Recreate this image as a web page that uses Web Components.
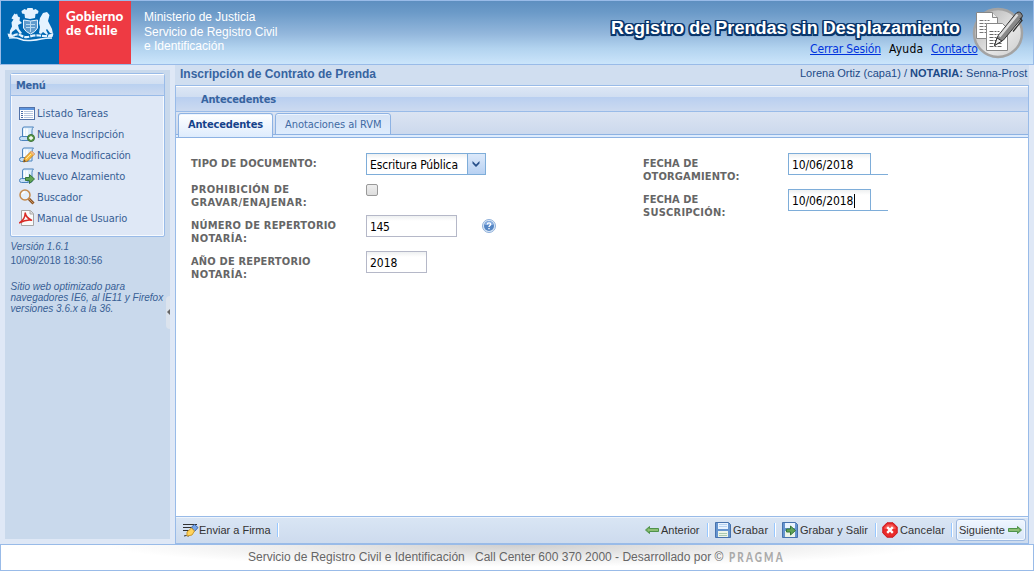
<!DOCTYPE html>
<html lang="es"><head><meta charset="utf-8"><title>Registro de Prendas sin Desplazamiento</title>
<style>
html,body{margin:0;height:571px;overflow:hidden;background:#dfe8f6}
body{--tahoma:"DejaVu Sans Condensed","DejaVu Sans",sans-serif;--arial:"Liberation Sans",Arial,sans-serif;font:11px/13px var(--arial);color:#15428b}
</style></head><body><rp-app></rp-app>
<script>
const define=(name,html,after)=>customElements.define(name,class extends HTMLElement{
  connectedCallback(){
    if(this.shadowRoot)return;
    const t=document.createElement('template');
    t.innerHTML='<style>*{box-sizing:border-box}</style>'+html;
    this.attachShadow({mode:'open'}).append(t.content.cloneNode(true));
    if(after)after.call(this);
  }
});

/* A single line of text tracked to a given width. */
define('fit-text','<style>:host{display:block;white-space:pre;flex:none}:host([t]){font-family:var(--tahoma);font-stretch:condensed}:host([b]){font-weight:bold}span{display:inline-block}:host([u]) span{text-decoration:underline}</style><span><slot></slot></span>',function(){
  const w=+this.getAttribute('w'),s=this.shadowRoot.querySelector('span');
  this.style.width=w+'px';
  const n=[...this.textContent].length;
  s.style.letterSpacing=((w-s.offsetWidth)/n)+'px';
});

const page='<path d="M5 1h9.500q-1.500 1-1.500 3.500V14H3.500V3Q3.500 1 5 1z" fill="#dcedfc" stroke="#4b83bd"/><path d="M5.500 2.500V11M8 2.500V11" stroke="#fff" stroke-width="1.500"/><path d="M2.500 10.500H9V14.500H2.500q-2 0-2-2t2-2z" fill="#c4def5" stroke="#4b83bd"/>';
const icons={
list:'<rect x=".5" y="2.500" width="15" height="12" fill="#fff" stroke="#5272a8"/><path d="M1 4h14" stroke="#5c94de" stroke-width="2"/><path d="M2 6.500h2m-2 2h2m-2 2h2m-2 2h2" stroke="#4b6ea8"/><path d="M5 6.500h9m-9 2h9m-9 2h9m-9 2h9" stroke="#b6c6de"/>',
add:page+'<circle cx="12" cy="12" r="3.500" fill="#5d9e48" stroke="#3c6f38"/><path d="M12 10v4m-2-2h4" stroke="#fff" stroke-width="1.300"/>',
edit:page+'<path d="M4.500 15l1-4 7-7 3 3-7 7z" fill="#f8bc42" stroke="#c8801c"/><path d="M11.500 5l3 3 1-1-3-3z" fill="#ecb5a0"/><path d="M4.500 15l2.500-.7-1.800-1.800z" fill="#54483b"/><path d="M7 12l5-5" stroke="#ffe9a0"/>',
go:page+'<path d="M6.500 9.500h4v-3l5 4.500-5 4.500v-3h-4z" fill="#61a455" stroke="#37763b"/>',
search:'<path d="M9.800 9.800l4.700 4.700" stroke="#8a5427" stroke-width="3"/><path d="M10 10l4.500 4.500" stroke="#cb935b"/><circle cx="6" cy="6" r="5" fill="#e6f1fc" stroke="#c58a4c" stroke-width="1.500"/><path d="M3 5q1-2 3-2" stroke="#fff" stroke-width="1.500" fill="none"/>',
pdf:'<path d="M2.500.5h9l3 3v12h-12z" fill="#fafafa" stroke="#a5a5a5"/><path d="M11 .5V4h3.500" fill="#ddd" stroke="#aaa"/><path d="M.5 12.800Q6 9.500 6.200 3 7 7.500 12.500 10.200 7 9.500.5 12.800z" fill="none" stroke="#d92b26" stroke-width="1.500" stroke-linejoin="round"/>',
sign:'<path d="M0 2.500h14M0 5.500h11M0 8.500h7" stroke="#333" stroke-width="1.200"/><path d="M1 14q2-1 5 0" stroke="#333" fill="none"/><path d="M8.500 5l3-2.500 3.500 3-3.500 4z" fill="#76a5e8" stroke="#3d68ae"/><path d="M4 14V10L8.500 6l3 3-2.500 4z" fill="#ffd35c" stroke="#cb982d"/>',
left:'<path d="M1.500 8l4-3.500v2h9v3h-9v2z" fill="#72ad5d" stroke="#4f934b"/><path d="M4 8h10" stroke="#a8d08d"/>',
right:'<path d="M14.500 8l-4-3.500v2h-9v3h9v2z" fill="#72ad5d" stroke="#4f934b"/><path d="M2 8h10" stroke="#a8d08d"/>',
save:'<path d="M.5.5h13l2 2v13H.5z" fill="#6594cf" stroke="#4772ad"/><path d="M3 1h10v6H3z" fill="#e9f3ff"/><path d="M4 2.500h8M4 4.500h8" stroke="#b6d2f1"/><path d="M3 9h10v6H3z" fill="#edf4e9"/><path d="M4 11.500h8m-8 2h8" stroke="#a8c9b0"/>',
savego:'<path d="M.5.5h13l2 2v13H.5z" fill="#6594cf" stroke="#4772ad"/><path d="M3 1h10v5H3z" fill="#e9f3ff"/><path d="M3 9h10v6H3z" fill="#edf4e9"/><path d="M4.500 7h4V4l5 4.500-5 4.500v-3h-4z" fill="#61a455" stroke="#37763b"/>',
cancel:'<path d="M5 .8h6L15.200 5v6L11 15.200H5L.8 11V5z" fill="#e92b2b" stroke="#c9161d"/><path d="M2.500 7V5.500l3-3h5l3 3V7z" fill="#ff7770" opacity=".6"/><path d="M5.200 5.200l5.600 5.600m0-5.600l-5.600 5.600" stroke="#fff" stroke-width="2.400"/>',
help:'<circle cx="8" cy="8" r="6.500" fill="#dce9f7" stroke="#8fb0da"/><circle cx="8" cy="8" r="5" fill="#5485c4"/><path d="M3.500 7a4.500 4 0 0 1 9 0z" fill="#87ade0"/><path d="M6.300 6.500q0-1.600 1.700-1.600t1.700 1.400c0 1.200-1.700 1.300-1.700 2.600M8 10v1.300" fill="none" stroke="#fff" stroke-width="1.400"/>'
};
define('rp-icon','<style>:host{display:block;width:16px;height:16px;flex:none}svg{display:block}</style><svg width="16" height="16" viewBox="0 0 16 16"></svg>',function(){this.shadowRoot.querySelector('svg').innerHTML=icons[this.getAttribute('name')]});

define('rp-arms',`<style>:host{display:block;width:58px;height:63px;background:#0068b3}</style>
<svg width="58" height="63" viewBox="1 1 58 63" fill="#e5f3ff"><path d="M25 18l-.5-4-2.500-.5-.5-2.500 3-2 2 1 1-2h5l1 2 2-1 3 2-.5 2.500-2.500.5-.5 4-5 1z"/><path d="M23.500 20q7 2 14 0v8q-2 4-7 6-5-2-7-6z" fill="#5f9bcd" stroke="#e5f3ff"/><path d="M26 24.500h9m-9 3h9M30.500 21v11" stroke="#b8d9f0" fill="none"/><path d="M22 23l-4 2 1 4 3 4-2 1-4-5-4 3-1 4-1.500-.5.500-5 2-4-.5-4 2-3-2-1 1-2 2-3 1.500 1 1-1 1 3 2 1-.5 3z"/><path d="M39 23l1-5 3-5 4-1 2.500 3-1.500 6 4 8 1 5-3-1-3-4-1 1 2 4-1 1-4-3-2 2-2-1 1-6z"/><path d="M7.500 33.500l5 1 1 3-5-.5zm46 0l-5 1-1 3 5-.5z"/><path d="M13 36q4-3 8-.500t9 1 9-1 9 .5" fill="none" stroke="#e5f3ff" stroke-width="2.200" stroke-dasharray="5 1"/><path d="M9 38q7-1 11 1t10.500 1.500T41 39t11-1" fill="none" stroke="#e5f3ff" stroke-width="1.500"/></svg>`);
define('rp-seal',`<style>:host{display:block;width:52px;height:54px}svg{display:block}</style><svg width="52" height="54" viewBox="0 0 52 54"><defs><linearGradient id="g" x2="1" y2="1"><stop stop-color="#aaa"/><stop offset=".6" stop-color="#e6e6e6"/><stop offset="1" stop-color="#ccc"/></linearGradient></defs><circle cx="26" cy="27" r="24" fill="url(#g)" stroke="#a3a3a3" stroke-width="2.500"/><path d="M4.500 6.500h16l5 5v21h-21z" fill="#fff" stroke="#888"/><path d="M20.500 6.500v5h5" fill="#eee" stroke="#888"/><path d="M7.500 14.500h10m-10 3h7m-7 3h7m-7 3h7m-7 3h7" stroke="#777" stroke-dasharray="4 1 2 1"/><path d="M14.500 17.500h16l5 5v22h-21z" fill="#fff" stroke="#888"/><path d="M17.500 25.500h10m-10 3h12m-12 3h11m-11 3h9m-9 3h13m-13 3h12" stroke="#666" stroke-dasharray="4 1 2 1"/><path d="M22.500 39.500l3-9L43 8.500q3-4 6-1.500t0 6L31.500 34z" fill="#888" stroke="#333"/><path d="M27.500 30.500L45.500 8.500" stroke="#ddd" stroke-width="2.500"/><path d="M22.500 39.500l2.500-7.500 5 3z" fill="#eee" stroke="#333"/><path d="M48 12l2 2.500-9 11" fill="none" stroke="#333" stroke-width="1.300"/></svg>`);

define('rp-header',`<style>:host{display:flex;height:65px;border:1px solid #99bbe8;background:linear-gradient(#5e8fc0,#6b9ac8 18%,#93b7dc 52%,#b2d3ef 75%,#cbe5fb)}
.gob{width:72px;background:#ee3a43;color:#fff;padding:9px 0 0 7px;font:900 13.500px/13px Lato,sans-serif}
.min{margin-left:13px;padding-top:9px;color:#fff;font:12px/14.500px var(--arial)}
.right{margin-left:auto;width:422px;padding-top:16px;flex:none}
.title{color:#fff;font:bold 18px/22px var(--arial);text-shadow:-1.500px 0 #0a366c,1.500px 0 #0a366c,0 -1.500px #0a366c,0 1.500px #0a366c,-1.500px -1.500px 0 #0a366c,1.500px 1.500px 0 #0a366c,1.500px -1.500px 0 #0a366c,-1.500px 1.500px 0 #0a366c,0 2px 1px #0a366c}
.links{display:flex;padding:3px 0 0 199px;font-size:12px;line-height:14px;color:#000}.links [u]{color:#0033dd}
.links>*+*{margin-left:8px}rp-seal{margin:5px 9px 0 -61px;flex:none}</style>
<rp-arms></rp-arms><div class="gob"><fit-text w="58" style="height:14px">Gobierno</fit-text><fit-text w="52">de Chile</fit-text></div>
<div class="min"><fit-text w="111">Ministerio de Justicia</fit-text><fit-text w="133">Servicio de Registro Civil</fit-text><fit-text w="80">e Identificación</fit-text></div>
<div class="right"><fit-text class="title" w="349">Registro de Prendas sin Desplazamiento</fit-text><div class="links"><fit-text u t w="71">Cerrar Sesión</fit-text><fit-text t w="34">Ayuda</fit-text><fit-text u t w="47">Contacto</fit-text></div></div>
<rp-seal></rp-seal>`);

define('menu-item','<style>:host{display:flex;height:21px;align-items:center;font-family:var(--tahoma);color:#385f95}</style><slot name="icon"></slot><slot></slot>',function(){const i=document.createElement('rp-icon');i.setAttribute('name',this.getAttribute('icon'));i.slot='icon';i.style.margin='0 2px 2px 0';this.append(i)});

define('rp-side',`<style>:host{display:flex;width:175px;padding:5px}
.w{width:165px;background:#c9d9ec;padding:3px 5px;position:relative}
.panel{height:164px;border:1px solid #99bbe8;border-radius:3px 3px 2px 2px;background:#dfe8f6;box-shadow:inset 0 0 0 1px #f6faff}
.head{height:22px;padding:5px 0 0 5px;border-bottom:1px solid #99bbe8;background:linear-gradient(#fff 0 1px,#dce6f5 1px,#d0def1 49%,#bad1f0 50%,#ccdaf0);color:#3764a0}
.items{padding:7px 8px}.info{font-size:10px;line-height:11px;color:#385f95;padding:4px 0 0 .5px}.d{padding:3px 0 15px}
.grip{position:absolute;right:0;top:226px;width:4px;height:33px;background:#dbe3ed;border-radius:4px 0 0 4px}.grip svg{display:block;margin-top:13px}</style>
<div class="w"><div class="panel"><div class="head"><fit-text t b w="30">Menú</fit-text></div><div class="items">
<menu-item icon="list"><fit-text t w="71">Listado Tareas</fit-text></menu-item><menu-item icon="add"><fit-text t w="87">Nueva Inscripción</fit-text></menu-item><menu-item icon="edit"><fit-text t w="94">Nueva Modificación</fit-text></menu-item><menu-item icon="go"><fit-text t w="88">Nuevo Alzamiento</fit-text></menu-item><menu-item icon="search"><fit-text t w="45">Buscador</fit-text></menu-item><menu-item icon="pdf"><fit-text t w="90">Manual de Usuario</fit-text></menu-item></div></div>
<div class="info"><i><fit-text w="59">Versión 1.6.1</fit-text></i><div class="d"><fit-text w="92">10/09/2018 18:30:56</fit-text></div><i><fit-text w="115">Sitio web optimizado para</fit-text><fit-text w="153">navegadores IE6, al IE11 y Firefox</fit-text><fit-text w="103">versiones 3.6.x a la 36.</fit-text></i></div>
<div class="grip"><svg width="4" height="6"><path d="M4 0v6L1 3z" fill="#666"/></svg></div></div>`);

define('rp-field',`<style>:host{display:flex;height:36px;color:#666}:host([short]){height:26px}.l{padding-top:4px;flex:none;width:var(--lw,175px)}</style><div class="l"><slot name="l"></slot></div><slot></slot>`);
define('rp-input',`<style>:host{box-sizing:border-box;display:flex;height:22px;border:1px solid #b5b8c8;background:linear-gradient(#eef0f1,#fff 5px);color:#000;font:12px/14px var(--tahoma);padding:4px 0 0 3px;flex:none}:host([blue]){border-color:#7eadd9}</style><slot></slot>`);

define('rp-form',`<style>:host{display:flex;height:378px;background:#fff;padding:15px 0 0 15px}.a{width:452px}.b{--lw:145px}
.arrow{width:18px;height:20px;margin:-4px 0 0 auto;border-left:1px solid #7eadd9;background:linear-gradient(#dce9fa,#b8d1f2)}.arrow svg{display:block;margin:6px 0 0 3px}
.check{width:12px;height:12px;border:1px solid #999;border-radius:2px;background:linear-gradient(#eee,#ddd);margin-top:5px}
.help{margin:3px 0 0 24px}.line{width:17px;height:22px;border-bottom:1px solid #7eadd9}.caret{width:1px;height:14px;background:#000;margin-left:1px}</style>
<div class="a"><rp-field short><fit-text slot="l" t b w="126">TIPO DE DOCUMENTO:</fit-text><rp-input blue style="width:120px"><fit-text t w="88">Escritura Pública</fit-text><div class="arrow"><svg width="10" height="8"><path d="M1.500 1l3.500 3.500L8.500 1v2.500L5 7 1.500 3.500z" fill="#28508a"/></svg></div></rp-input></rp-field>
<rp-field><div slot="l"><fit-text t b w="99">PROHIBICIÓN DE</fit-text><fit-text t b w="116">GRAVAR/ENAJENAR:</fit-text></div><div class="check"></div></rp-field>
<rp-field><div slot="l"><fit-text t b w="145">NÚMERO DE REPERTORIO</fit-text><fit-text t b w="56">NOTARÍA:</fit-text></div><rp-input style="width:91px"><fit-text t w="20">145</fit-text></rp-input><rp-icon class="help" name="help"></rp-icon></rp-field>
<rp-field><div slot="l"><fit-text t b w="120">AÑO DE REPERTORIO</fit-text><fit-text t b w="56">NOTARÍA:</fit-text></div><rp-input style="width:61px"><fit-text t w="27">2018</fit-text></rp-input></rp-field></div>
<div class="b"><rp-field><div slot="l"><fit-text t b w="55">FECHA DE</fit-text><fit-text t b w="97">OTORGAMIENTO:</fit-text></div><rp-input blue style="width:83px"><fit-text t w="61">10/06/2018</fit-text></rp-input><div class="line"></div></rp-field>
<rp-field><div slot="l"><fit-text t b w="55">FECHA DE</fit-text><fit-text t b w="83">SUSCRIPCIÓN:</fit-text></div><rp-input blue style="width:83px"><fit-text t w="61">10/06/2018</fit-text><div class="caret"></div></rp-input><div class="line"></div></rp-field></div>`);

define('rp-tabs',`<style>:host{display:flex;height:26px;background:linear-gradient(#dbe4f2,#ccd9ed 22px,#8db2e3 22px 23px,#deecfd 23px 25px,#8db2e3 25px);padding:1px 0 0 2px}
div{height:22px;border:1px solid #8db2e3;border-radius:3px 3px 0 0;padding:4px 9px 0;background:linear-gradient(#d6e3f5,#deecfd);box-shadow:inset 0 1px #edf5ff;color:#416aa3}
.on{height:24px;border-bottom:0;background:linear-gradient(#fff,#deecfd);color:#15428b;margin-right:2px}</style><div class="on"><fit-text t b w="75">Antecedentes</fit-text></div><div><fit-text t w="96">Anotaciones al RVM</fit-text></div>`);

define('rp-toolbar',`<style>:host{display:flex;align-items:center;height:28px;border-top:1px solid #99bbe8;border-bottom:1px solid #99bbe8;background:linear-gradient(#eef4fc 0 1px,#d9e5f4 1px,#cddbee);padding-left:7px;color:#333}
i{width:2px;height:14px;background:linear-gradient(90deg,#98c8ff 50%,#fff 50%);margin:0 6px 0 7px}
.sp{flex:1}rp-icon{margin-right:2px}.n{display:flex;align-items:center;width:70px;height:22px;margin-right:2px;border:1px solid #9ebae1;border-radius:3px;background:linear-gradient(#eff6ff,#d8e6f8);box-shadow:inset 0 0 0 1px #f2f8ff;padding-left:2px}.n rp-icon{margin-left:2px}</style>
<rp-icon name="sign" style="margin-right:0"></rp-icon><fit-text w="72">Enviar a Firma</fit-text><i style="margin-left:6px"></i><div class="sp"></div>
<rp-icon name="left" style="margin-right:1px"></rp-icon><fit-text w="39">Anterior</fit-text><i></i><rp-icon name="save"></rp-icon><fit-text w="35">Grabar</fit-text><i style="margin-left:6px"></i><rp-icon name="savego"></rp-icon><fit-text w="68">Grabar y Salir</fit-text><i style="margin-left:7px;margin-right:5px"></i><rp-icon name="cancel"></rp-icon><fit-text w="45">Cancelar</fit-text><i style="margin-left:6px;margin-right:3px"></i><div class="n"><fit-text w="46">Siguiente</fit-text><rp-icon name="right"></rp-icon></div>`);

define('rp-main',`<style>:host{display:block;width:854px;background:#d0def0}
.t{display:flex;justify-content:space-between;height:20px;padding:2px 2px 0 5px}.t>div{display:flex;color:#1c4a87}.big{color:#3764a0;font-size:12px;padding-top:1px}
.box{border-left:1px solid #99bbe8;border-right:1px solid #99bbe8}
.h{height:27px;border-top:1px solid #99bbe8;border-bottom:1px solid #99bbe8;background:linear-gradient(#fff 0 1px,#dce6f5 1px,#d0def1 44%,#b9cff0 45%,#ccdaf0);padding:7px 0 0 25px;color:#3764a0}</style>
<div class="t"><fit-text class="big" b w="196">Inscripción de Contrato de Prenda</fit-text><div><fit-text w="110">Lorena Ortiz (capa1) / </fit-text><fit-text b w="53">NOTARIA:</fit-text><fit-text w="64"> Senna-Prost</fit-text></div></div>
<div class="box"><div class="h"><fit-text t b w="75">Antecedentes</fit-text></div><rp-tabs></rp-tabs><rp-form></rp-form><rp-toolbar></rp-toolbar></div>`);

define('rp-footer',`<style>:host{display:flex;height:27px;border:1px solid #99bbe8;background:radial-gradient(ellipse 410px 22px at 50% 0,#cfcfcf,#eee 60%,#fff);color:#666;font-size:12px;line-height:14px;padding:5px 0 0 247px}.p{font:900 13px/15px Lato,sans-serif;color:#aaa;margin-left:6px;transform:scaleX(.76);transform-origin:0 0}</style><fit-text w="217">Servicio de Registro Civil e Identificación</fit-text><fit-text w="248" style="margin-left:10px">Call Center 600 370 2000 - Desarrollado por ©</fit-text><fit-text class="p" w="73">PRAGMA</fit-text>`);

define('rp-app','<style>:host{display:block;width:1034px;height:571px;background:#dfe8f6}rp-header,rp-side,rp-main,rp-footer{box-sizing:border-box}.m{display:flex;height:479px}</style><rp-header></rp-header><div class="m"><rp-side></rp-side><rp-main></rp-main></div><rp-footer></rp-footer>');
</script></body></html>
